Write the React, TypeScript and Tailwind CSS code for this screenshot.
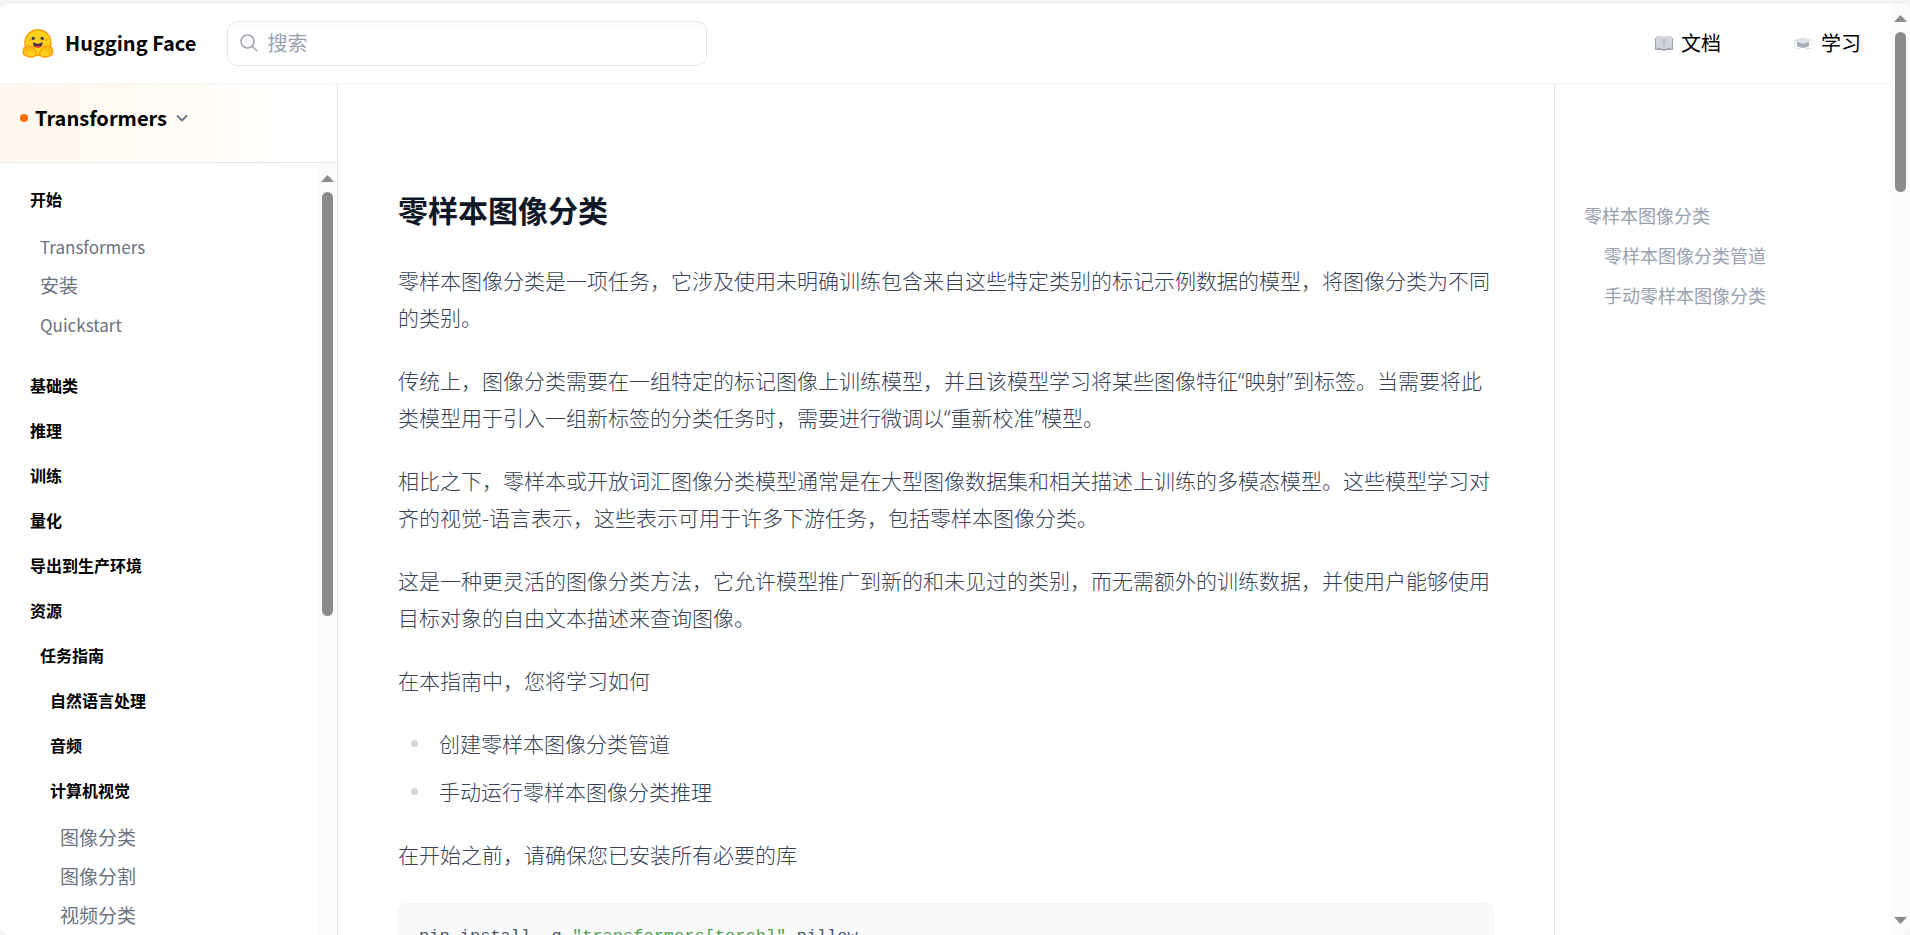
import React from 'react'

type NavItem = {
  title: string
  level: 0 | 1 | 2 | 3
  heading?: boolean
  latin?: boolean
  first?: boolean
  last?: boolean
}

const NAV: NavItem[] = [
  { title: '开始', level: 0, heading: true },
  { title: 'Transformers', level: 1, latin: true, first: true },
  { title: '安装', level: 1 },
  { title: 'Quickstart', level: 1, latin: true, last: true },
  { title: '基础类', level: 0, heading: true },
  { title: '推理', level: 0, heading: true },
  { title: '训练', level: 0, heading: true },
  { title: '量化', level: 0, heading: true },
  { title: '导出到生产环境', level: 0, heading: true },
  { title: '资源', level: 0, heading: true },
  { title: '任务指南', level: 1, heading: true },
  { title: '自然语言处理', level: 2, heading: true },
  { title: '音频', level: 2, heading: true },
  { title: '计算机视觉', level: 2, heading: true },
  { title: '图像分类', level: 3, first: true },
  { title: '图像分割', level: 3 },
  { title: '视频分类', level: 3 },
]

const INDENT = ['pl-[30px]', 'pl-[40px]', 'pl-[50px]', 'pl-[60px]']

const INTRO = [
  '零样本图像分类是一项任务，它涉及使用未明确训练包含来自这些特定类别的标记示例数据的模型，将图像分类为不同的类别。',
  '传统上，图像分类需要在一组特定的标记图像上训练模型，并且该模型学习将某些图像特征“映射”到标签。当需要将此类模型用于引入一组新标签的分类任务时，需要进行微调以“重新校准”模型。',
  '相比之下，零样本或开放词汇图像分类模型通常是在大型图像数据集和相关描述上训练的多模态模型。这些模型学习对齐的视觉-语言表示，这些表示可用于许多下游任务，包括零样本图像分类。',
  '这是一种更灵活的图像分类方法，它允许模型推广到新的和未见过的类别，而无需额外的训练数据，并使用户能够使用目标对象的自由文本描述来查询图像。',
  '在本指南中，您将学习如何',
]

const HAND =
  'M17.52 48c-1.62 0-3.06.66-4.07 1.87a5.97 5.97 0 0 0-1.33 3.76 7.1 7.1 0 0 0-1.94-.3c-1.55 0-2.95.59-3.94 1.66a5.8 5.8 0 0 0-.8 7 5.3 5.3 0 0 0-1.79 2.82c-.24.9-.48 2.8.8 4.74a5.22 5.22 0 0 0-.37 5.02c1.02 2.32 3.57 4.14 8.52 6.1 3.07 1.22 5.89 2 5.91 2.01a44.33 44.33 0 0 0 10.93 1.6c5.86 0 10.05-1.8 12.46-5.34 3.88-5.69 3.33-10.9-1.7-15.92-2.77-2.78-4.62-6.87-5-7.77-.78-2.66-2.84-5.62-6.25-5.62a5.7 5.7 0 0 0-4.6 2.46c-1-1.26-1.98-2.25-2.86-2.82A7.4 7.4 0 0 0 17.52 48Z'
const HAND_FILL =
  'M38.6 76.69c2.75-4.04 2.55-7.07-1.22-10.84-3.78-3.77-5.98-9.3-5.98-9.3s-.82-3.2-2.69-2.9c-1.87.3-3.24 5.08.68 8.01 3.91 2.93-.78 4.92-2.29 2.17-1.5-2.75-5.62-9.82-7.76-11.18-2.13-1.35-3.63-.6-3.13 2.2.5 2.79 9.43 9.55 8.56 11-.87 1.47-3.93-1.71-3.93-1.71s-9.57-8.71-11.66-6.44c-2.08 2.27 1.59 4.17 6.8 7.33 5.23 3.16 5.64 4 4.9 5.2-.75 1.2-12.28-8.53-13.36-4.4-1.08 4.11 11.77 5.3 10.98 8.15-.8 2.85-9.06-5.38-10.74-2.18-1.7 3.21 11.65 6.98 11.76 7.01 4.3 1.12 15.25 3.49 19.08-2.12Z'

function Logo() {
  return (
    <svg viewBox="0 0 95 88" className="h-[31px] w-[34px] shrink-0" aria-hidden="true">
      <circle cx="47.21" cy="41.75" r="36.75" fill="#FFD21E" stroke="#FF9D0B" strokeWidth="4" />
      <path fill="#3A3B45" d="M58.5 32.3c1.28.44 1.78 3.06 3.07 2.38a5 5 0 1 0-6.76-2.07c.61 1.15 2.55-.72 3.7-.32ZM34.95 32.3c-1.28.44-1.79 3.06-3.07 2.38a5 5 0 1 1 6.76-2.07c-.61 1.15-2.56-.72-3.7-.32Z" />
      <path fill="#FF323D" d="M46.96 56.29c9.83 0 13-8.76 13-13.26 0-2.34-1.57-1.6-4.09-.36-2.33 1.15-5.46 2.74-8.9 2.74-7.19 0-13-6.88-13-2.38s3.16 13.26 13 13.26Z" />
      <path fill="#3A3B45" d="M39.43 54a8.7 8.7 0 0 1 5.3-4.49c.4-.12.81.57 1.24 1.28.4.68.82 1.37 1.24 1.37.45 0 .9-.68 1.33-1.35.45-.7.89-1.38 1.32-1.25a8.61 8.61 0 0 1 5 4.17c3.73-2.94 5.1-7.74 5.1-10.7 0-2.34-1.57-1.6-4.09-.36l-.14.07c-2.31 1.15-5.39 2.67-8.77 2.67s-6.45-1.52-8.77-2.67c-2.6-1.29-4.23-2.1-4.23.29 0 3.05 1.46 8.06 5.47 10.97Z" />
      <circle cx="70.71" cy="33.75" r="3.25" fill="#FF9D0B" />
      <circle cx="24.21" cy="33.75" r="3.25" fill="#FF9D0B" />
      <path fill="#FF9D0B" d={HAND} />
      <path fill="#FFD21E" d={HAND_FILL} />
      <g transform="translate(94.4 0) scale(-1 1)">
        <path fill="#FF9D0B" d={HAND} />
        <path fill="#FFD21E" d={HAND_FILL} />
      </g>
    </svg>
  )
}

function BookIcon() {
  return (
    <svg viewBox="0 0 18 16" className="h-4 w-[18px]" aria-hidden="true">
      <path fill="#9ca3af" d="M0 3h1v10.400c3-.8 5.500-.6 8 .6 2.500-1.200 5-1.400 8-.6V3h1v12h-6.500c-.6 0-1 .8-2.500.8S7.100 15 6.500 15H0Z" />
      <path fill="#d1d5db" d="M1 1.500C3.500.4 6.500.4 9 2c2.500-1.600 5.500-1.600 8-.5v12c-3-.8-5.500-.7-8 .6-2.500-1.300-5-1.400-8-.6Z" />
      <path fill="#9ca3af" d="M8.500 3.500h1v8h-1Z" />
    </svg>
  )
}

function CapIcon() {
  return (
    <svg viewBox="0 0 20 14" className="h-[14px] w-5" aria-hidden="true">
      <path fill="#a9b0bc" d="M4 5h12v5c-2 2.400-10 2.400-12 0Z" />
      <path fill="#dfe2e7" d="M10 1 0 4.200 10 8l10-3.800Z" />
      <path fill="none" stroke="#d9dce2" d="M2.500 5.500C1 8 1 10 3.500 11M3.500 12.500h3M13 12.500h5" />
    </svg>
  )
}

function ScrollTrack({ thumb, down }: { thumb: string; down?: boolean }) {
  return (
    <div className="flex w-[19px] shrink-0 flex-col items-center bg-[#fbfbfb] pt-3 pb-[11px]" aria-hidden="true">
      <svg viewBox="0 0 13 7" className="h-[7px] w-[13px] shrink-0">
        <path fill="#8b8b8b" d="M6.500 0 13 7H0Z" />
      </svg>
      <div className={`mt-[10px] w-[11px] shrink-0 rounded-full bg-[#8b8b8b] ${thumb}`} />
      {down && (
        <svg viewBox="0 0 13 7" className="mt-auto h-[7px] w-[13px] shrink-0">
          <path fill="#8b8b8b" d="M0 0h13L6.500 7Z" />
        </svg>
      )}
    </div>
  )
}

function Header() {
  return (
    <header className="flex h-[81px] shrink-0 items-center border-b border-gray-100 pr-[30px] pl-[21px]">
      <a href="#home" className="flex items-center gap-[10px]">
        <Logo />
        <span className="text-[20px] font-bold text-black">Hugging Face</span>
      </a>
      <label className="ml-[31px] flex h-[45px] w-[480px] items-center gap-[9px] rounded-[10px] border border-gray-200 bg-gradient-to-b from-gray-50 to-white to-25% px-3">
        <svg viewBox="0 0 18 18" className="h-[18px] w-[18px] shrink-0" fill="none" stroke="#9ca3af" strokeWidth="1.500" aria-hidden="true">
          <circle cx="7.500" cy="7.500" r="6.500" />
          <path d="m12.200 12.200 5 5" />
        </svg>
        <input
          type="search"
          aria-label="搜索"
          placeholder="搜索"
          className="w-full bg-transparent text-[20px] outline-none placeholder:text-gray-400"
        />
      </label>
      <nav className="ml-auto flex gap-[72px] text-[20px] text-black">
        <a href="#docs" className="flex items-center gap-2">
          <BookIcon />
          文档
        </a>
        <a href="#learn" className="flex items-center gap-2">
          <CapIcon />
          学习
        </a>
      </nav>
    </header>
  )
}

function Sidebar() {
  return (
    <aside className="flex w-[338px] shrink-0 flex-col border-r border-gray-200">
      <div className="h-[79px] shrink-0 border-b border-gray-200 bg-gradient-to-r from-orange-50 to-white pt-[19px] pl-5">
        <button type="button" className="flex h-[30px] items-center text-[20px] font-bold text-black">
          <span className="mr-[7px] h-2 w-2 rounded-full bg-[#ff6b00]" />
          Transformers
          <svg viewBox="0 0 12 8" className="ml-[9px] h-2 w-3" fill="none" stroke="#6b7280" strokeWidth="1.800" aria-hidden="true">
            <path d="m1 1.500 5 5 5-5" />
          </svg>
        </button>
      </div>
      <div className="flex min-h-0 flex-1">
        <nav className="flex-1 overflow-hidden pt-[13px]">
          {NAV.map(item =>
            item.heading ? (
              <h2
                key={item.title}
                className={`flex h-[45px] items-center text-[16px] font-bold text-black ${INDENT[item.level]}`}
              >
                {item.title}
              </h2>
            ) : (
              <a
                key={item.title}
                href={`#${item.title}`}
                className={`flex h-[39px] items-center text-gray-500 ${item.latin ? 'text-[17px]' : 'text-[19px]'} ${INDENT[item.level]} ${item.first ? 'mt-[6px]' : ''} ${item.last ? 'mb-[18px]' : ''}`}
              >
                {item.title}
              </a>
            )
          )}
        </nav>
        <ScrollTrack thumb="h-[424px]" />
      </div>
    </aside>
  )
}

// curly quotes are full width in the CJK font, so they take a Latin one
function Prose({ text }: { text: string }) {
  return (
    <p className="mb-[26px]">
      {text.split(/([“”])/).map((part, i) =>
        part === '“' || part === '”' ? (
          <span key={i} className="font-['Noto_Sans',sans-serif] leading-none">{part}</span>
        ) : (
          part
        )
      )}
    </p>
  )
}

function Article() {
  return (
    <main className="min-w-0 flex-1 overflow-hidden px-[60px] pt-[103px] text-[21px] leading-[37px] font-light text-gray-700">
      <h1 className="mb-[31px] text-[30px] leading-[44px] font-bold text-gray-900">零样本图像分类</h1>
      {INTRO.map(text => (
        <Prose key={text} text={text} />
      ))}
      <ul className="mb-[26px] flex flex-col gap-[11px]">
        {['创建零样本图像分类管道', '手动运行零样本图像分类推理'].map(text => (
          <li key={text} className="flex items-center gap-[21px] pl-[13px]">
            <span className="h-[7px] w-[7px] rounded-full bg-gray-300" />
            {text}
          </li>
        ))}
      </ul>
      <Prose text="在开始之前，请确保您已安装所有必要的库" />
      <pre className="mt-[30px] rounded-lg border border-gray-100 bg-gray-50 px-5 py-[14px] font-['Liberation_Mono',monospace] text-[17px] leading-[37px] text-gray-600">
        <code>
          pip install -q <span className="text-[#50a14f]">"transformers[torch]"</span> pillow
        </code>
      </pre>
    </main>
  )
}

function Toc() {
  return (
    <aside className="flex w-[337px] shrink-0 flex-col border-l border-gray-200 pt-[111px] pl-[29px] text-[18px] leading-[40px] text-gray-400">
      <a href="#zero-shot">零样本图像分类</a>
      <a href="#pipeline" className="pl-5">零样本图像分类管道</a>
      <a href="#manual" className="pl-5">手动零样本图像分类</a>
    </aside>
  )
}

export default function App() {
  return (
    <div className="h-screen bg-[#f5f5f5] pt-[2px] font-['Noto_Sans_CJK_SC',sans-serif]">
      <div className="flex h-full overflow-hidden rounded-[10px] border-t border-[#ebebeb] bg-white">
        <div className="flex min-w-0 flex-1 flex-col">
          <Header />
          <div className="flex min-h-0 flex-1">
            <Sidebar />
            <Article />
            <Toc />
          </div>
        </div>
        <ScrollTrack thumb="h-40" down />
      </div>
    </div>
  )
}
